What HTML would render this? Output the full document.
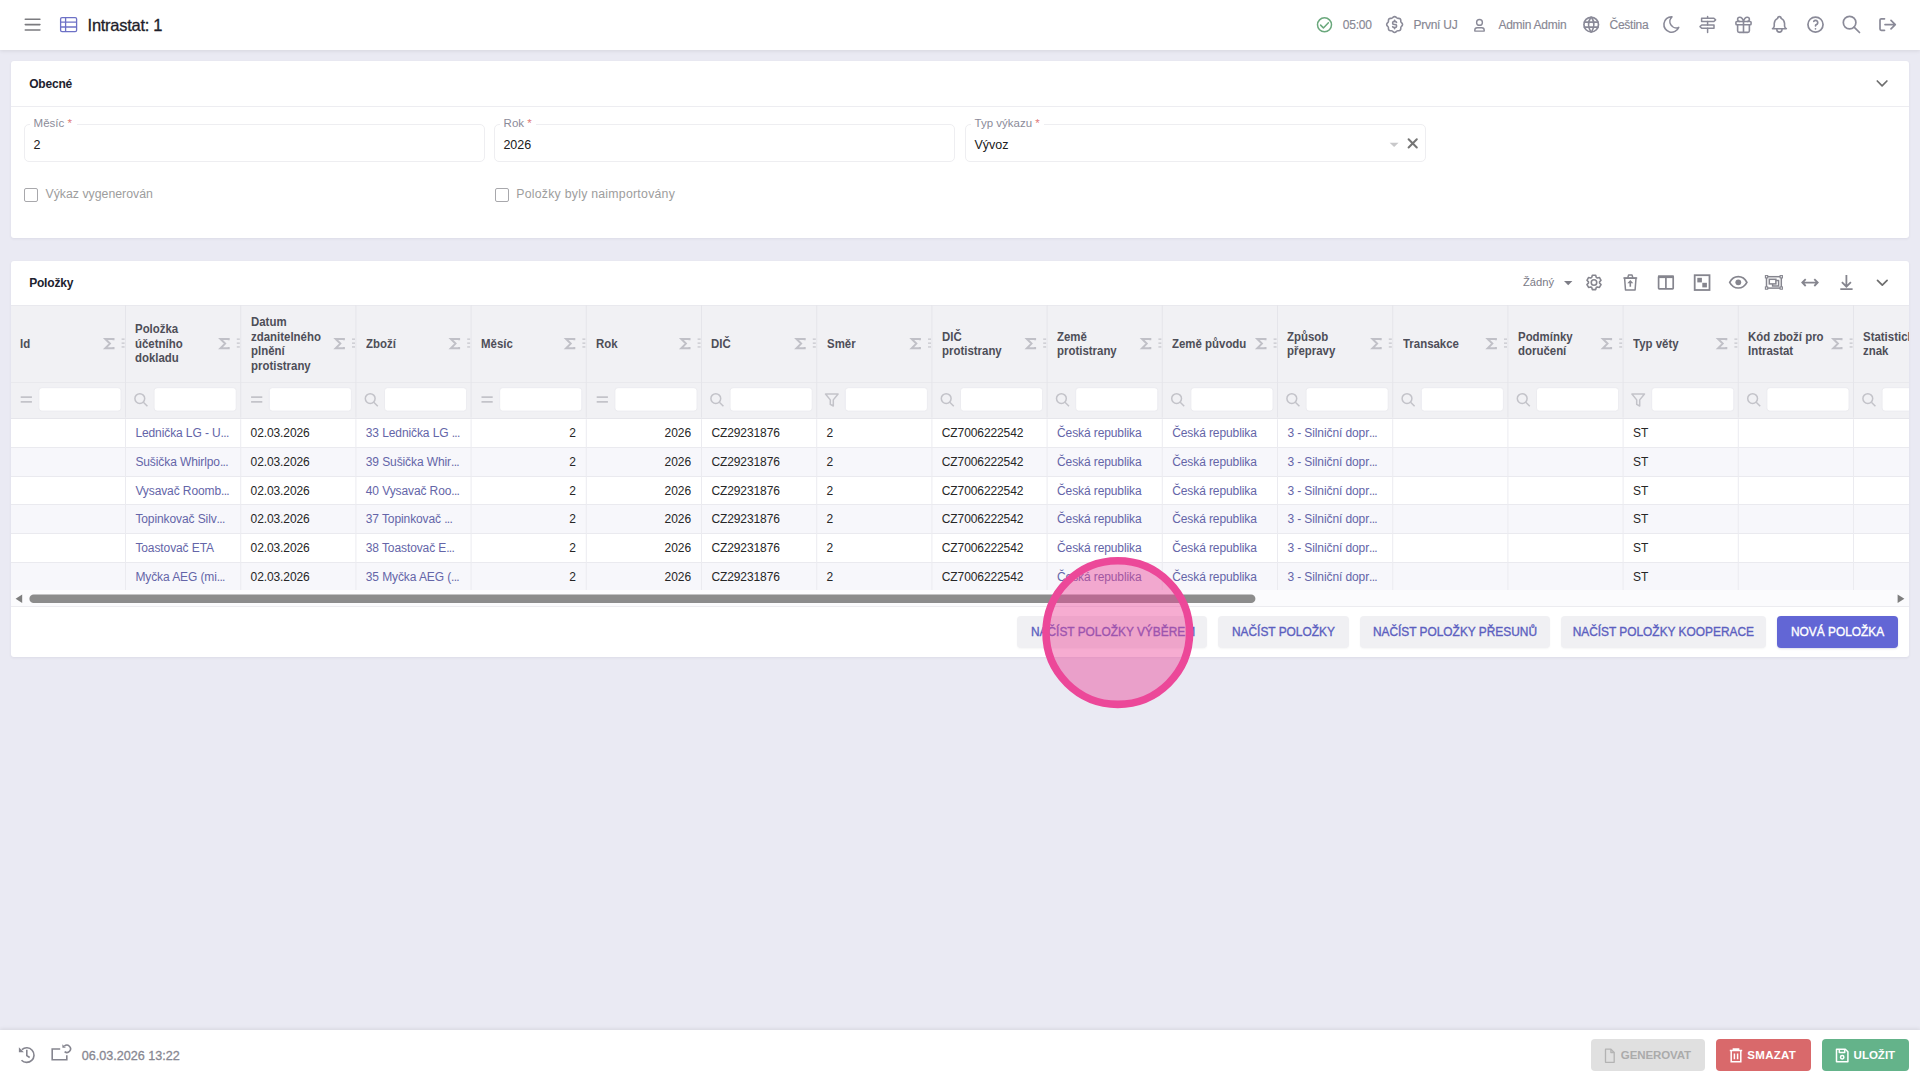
<!DOCTYPE html><html><head><meta charset="utf-8"><title>Intrastat: 1</title><style>
*{box-sizing:border-box}
html,body{margin:0;padding:0}
body{width:1920px;height:1080px;background:#eaeaf3;position:relative;overflow:hidden;font-family:"Liberation Sans",sans-serif;color:#222}
.a{position:absolute;white-space:nowrap}
.ov{position:absolute;left:0;top:0;overflow:visible}
.card{position:absolute;left:11px;width:1898px;background:#fff;border-radius:3px;box-shadow:0 1px 3px rgba(40,40,80,.07)}
.fld{position:absolute;top:124px;height:38px;border:1px solid #eeeef1;border-radius:5px;background:#fff}
.btn{position:absolute;top:616px;height:32px;border-radius:4px;background:#f0f0f3;color:#5c5fc0;font-size:11.9px;-webkit-text-stroke:0.35px currentColor;line-height:32px;text-align:center;white-space:nowrap;box-shadow:0 1px 2px rgba(0,0,0,.04)}
.fbtn{position:absolute;top:1039px;height:32px;border-radius:4px;white-space:nowrap;color:#fff}
</style></head><body>
<div class="a" style="left:0;top:0;width:1920px;height:50px;background:#fff;box-shadow:0 1px 4px rgba(0,0,0,.09)"></div>
<svg class="ov" width="1920" height="50" viewBox="0 0 1920 50"><g stroke="#7b7b7f" stroke-width="1.6" stroke-linecap="round"><path d="M25.3 19.2h14.6M25.3 24.6h14.6M25.3 30h14.6"/></g><g fill="none" stroke="#6d71c6" stroke-width="1.3"><rect x="60.6" y="17.6" width="16" height="14" rx="1.4"/><path d="M60.6 22.2h16M60.6 27h16M65.6 17.6v14"/></g><g fill="none" stroke="#6aa87c" stroke-width="1.5" stroke-linecap="round" stroke-linejoin="round"><circle cx="1324.5" cy="24.8" r="7"/><path d="M1320.6 25.1l2.8 2.8l5 -5.2"/></g><g transform="translate(1384.040,13.940) scale(0.88)" fill="none" stroke="#8a8a98" stroke-width="1.818" stroke-linecap="round" stroke-linejoin="round"><path d="M5 7.2a2.2 2.2 0 0 1 2.2 -2.2h1a2.2 2.2 0 0 0 1.55 -.64l.7 -.7a2.2 2.2 0 0 1 3.12 0l.7 .7c.412 .41 .97 .64 1.55 .64h1a2.2 2.2 0 0 1 2.2 2.2v1c0 .58 .23 1.138 .64 1.55l.7 .7a2.2 2.2 0 0 1 0 3.12l-.7 .7a2.2 2.2 0 0 0 -.64 1.55v1a2.2 2.2 0 0 1 -2.2 2.2h-1a2.2 2.2 0 0 0 -1.55 .64l-.7 .7a2.2 2.2 0 0 1 -3.12 0l-.7 -.7a2.2 2.2 0 0 0 -1.55 -.64h-1a2.2 2.2 0 0 1 -2.2 -2.2v-1a2.2 2.2 0 0 0 -.64 -1.55l-.7 -.7a2.2 2.2 0 0 1 0 -3.12l.7 -.7a2.2 2.2 0 0 0 .64 -1.55v-1"/><path d="M14.2 9.6a1.7 1.7 0 0 0 -1.6 -1h-1.2a1.7 1.7 0 0 0 0 3.4h1.2a1.7 1.7 0 0 1 0 3.4h-1.2a1.7 1.7 0 0 1 -1.6 -1"/><path d="M12 7.3v1.3"/><path d="M12 15.4v1.3"/></g><g fill="none" stroke="#8a8a98" stroke-width="1.4"><circle cx="1479.5" cy="22.4" r="2.9"/><path d="M1474.8 31.1v-0.9a2.4 2.4 0 0 1 2.4 -2.4h4.6a2.4 2.4 0 0 1 2.4 2.4v0.9z" stroke-linejoin="round"/></g><g transform="translate(1581.480,14.880) scale(0.81)" fill="none" stroke="#8a8a98" stroke-width="2.099" stroke-linecap="round" stroke-linejoin="round"><path d="M3 12a9 9 0 1 0 18 0a9 9 0 0 0 -18 0"/><path d="M3.6 9h16.8"/><path d="M3.6 15h16.8"/><path d="M11.5 3a17 17 0 0 0 0 18"/><path d="M12.5 3a17 17 0 0 1 0 18"/></g><g transform="translate(1661.340,14.240) scale(0.855)" fill="none" stroke="#8a8a98" stroke-width="1.871" stroke-linecap="round" stroke-linejoin="round"><path d="M12 3c.132 0 .263 0 .393 0a7.5 7.5 0 0 0 7.92 12.446a9 9 0 1 1 -8.313 -12.454z"/></g><g fill="none" stroke="#8a8a98" stroke-width="1.5" stroke-linejoin="round" stroke-linecap="round"><path d="M1701.6 18.3h12.3l1.7 1.6l-1.7 1.6h-12.3z"/><path d="M1714 25h-12.3l-1.7 1.6l1.7 1.6H1714z"/><path d="M1707.6 16.6v1.7M1707.6 21.5v3.5M1707.6 28.2v4.2"/></g><g transform="translate(1733.420,14.720) scale(0.84)" fill="none" stroke="#8a8a98" stroke-width="1.905" stroke-linecap="round" stroke-linejoin="round"><path d="M3 9a1 1 0 0 1 1 -1h16a1 1 0 0 1 1 1v2a1 1 0 0 1 -1 1h-16a1 1 0 0 1 -1 -1z"/><path d="M12 8l0 13"/><path d="M19 12v7a2 2 0 0 1 -2 2h-10a2 2 0 0 1 -2 -2v-7"/><path d="M7.5 8a2.5 2.5 0 0 1 0 -5a4.8 8 0 0 1 4.5 5a4.8 8 0 0 1 4.5 -5a2.5 2.5 0 0 1 0 5"/></g><g transform="translate(1769.080,14.080) scale(0.86)" fill="none" stroke="#8a8a98" stroke-width="1.860" stroke-linecap="round" stroke-linejoin="round"><path d="M10 5a2 2 0 1 1 4 0a7 7 0 0 1 4 6v3a4 4 0 0 0 2 3h-16a4 4 0 0 0 2 -3v-3a7 7 0 0 1 4 -6"/><path d="M9 17v1a3 3 0 0 0 6 0v-1"/></g><g transform="translate(1805.420,14.520) scale(0.84)" fill="none" stroke="#8a8a98" stroke-width="2.024" stroke-linecap="round" stroke-linejoin="round"><path d="M12 12m-9 0a9 9 0 1 0 18 0a9 9 0 1 0 -18 0"/><path d="M12 17l0 .01"/><path d="M12 13.5a1.5 1.5 0 0 1 1 -1.5a2.6 2.6 0 1 0 -3 -4"/></g><g transform="translate(1840.600,13.600) scale(0.9)" fill="none" stroke="#8a8a98" stroke-width="1.889" stroke-linecap="round" stroke-linejoin="round"><path d="M10 10m-7 0a7 7 0 1 0 14 0a7 7 0 1 0 -14 0"/><path d="M21 21l-6 -6"/></g><g fill="none" stroke="#8a8a98" stroke-width="1.7" stroke-linecap="round" stroke-linejoin="round"><path d="M1884.5 18.8h-3.2a1.3 1.3 0 0 0 -1.3 1.3v8.9a1.3 1.3 0 0 0 1.3 1.3h3.2"/><path d="M1885 24.6h10.3M1891 20.3l4.3 4.3l-4.3 4.3"/></g></svg>
<div class="a" style="left:87.60px;top:14.58px;font-size:16.5px;line-height:21px;color:#1e1e2a;letter-spacing:-0.28px;-webkit-text-stroke:0.3px #1e1e2a">Intrastat: 1</div>
<div class="a" style="left:1342.80px;top:16.74px;font-size:12px;line-height:16px;color:#878793;letter-spacing:-0.25px;-webkit-text-stroke:0.15px #878793">05:00</div>
<div class="a" style="left:1413.40px;top:16.74px;font-size:12px;line-height:16px;color:#878793;letter-spacing:-0.25px;-webkit-text-stroke:0.15px #878793">První UJ</div>
<div class="a" style="left:1498.40px;top:16.74px;font-size:12px;line-height:16px;color:#878793;letter-spacing:-0.25px;-webkit-text-stroke:0.15px #878793">Admin Admin</div>
<div class="a" style="left:1609.50px;top:16.74px;font-size:12px;line-height:16px;color:#878793;letter-spacing:-0.25px;-webkit-text-stroke:0.15px #878793">Čeština</div>
<div class="card" style="top:61px;height:177px"><div class="a" style="left:0;top:45px;width:1898px;height:1px;background:#ededf1"></div></div>
<div class="a" style="left:29.20px;top:75.84px;font-size:12px;line-height:16px;font-weight:bold;color:#20222e;letter-spacing:-0.2px">Obecné</div>
<div class="fld" style="left:24px;width:461px"></div>
<div class="a" style="left:30px;top:120px;width:47.1px;height:8px;background:#fff"></div>
<div class="a" style="left:33.60px;top:116.22px;font-size:11.5px;line-height:15px;color:#8b8b99">Měsíc <span style="color:#e07b7b">*</span></div>
<div class="a" style="left:33.40px;top:137.17px;font-size:12.5px;line-height:16px;color:#202020">2</div>
<div class="fld" style="left:494px;width:461px"></div>
<div class="a" style="left:500px;top:120px;width:36.0px;height:8px;background:#fff"></div>
<div class="a" style="left:503.60px;top:116.22px;font-size:11.5px;line-height:15px;color:#8b8b99">Rok <span style="color:#e07b7b">*</span></div>
<div class="a" style="left:503.40px;top:137.17px;font-size:12.5px;line-height:16px;color:#202020">2026</div>
<div class="fld" style="left:965px;width:461px"></div>
<div class="a" style="left:971px;top:120px;width:73.0px;height:8px;background:#fff"></div>
<div class="a" style="left:974.60px;top:116.22px;font-size:11.5px;line-height:15px;color:#8b8b99">Typ výkazu <span style="color:#e07b7b">*</span></div>
<div class="a" style="left:974.40px;top:137.17px;font-size:12.5px;line-height:16px;color:#202020">Vývoz</div>
<svg class="ov" width="1920" height="200" viewBox="0 0 1920 200"><path d="M1389.6 142.7h9l-4.5 4.4z" fill="#c8c8ca"/><path d="M1408.6 139.3l8.2 8.2M1416.8 139.3l-8.2 8.2" stroke="#757575" stroke-width="2" stroke-linecap="round"/><path d="M1877.3 81l4.8 4.8l4.8 -4.8" fill="none" stroke="#6e6e6e" stroke-width="1.7" stroke-linecap="round" stroke-linejoin="round"/></svg>
<div class="a" style="left:24px;top:188px;width:14px;height:14px;border:1.5px solid #a8a8ac;border-radius:2px"></div>
<div class="a" style="left:45.50px;top:186.44px;font-size:12.3px;line-height:16px;color:#9d9d9d">Výkaz vygenerován</div>
<div class="a" style="left:494.5px;top:188px;width:14px;height:14px;border:1.5px solid #a8a8ac;border-radius:2px"></div>
<div class="a" style="left:516.20px;top:186.44px;font-size:12.3px;line-height:16px;color:#9d9d9d;letter-spacing:0.25px">Položky byly naimportovány</div>
<div class="card" style="top:261px;height:396px"></div>
<div class="a" style="left:29.20px;top:274.54px;font-size:12px;line-height:16px;font-weight:bold;color:#20222e;letter-spacing:-0.2px">Položky</div>
<div class="a" style="left:1523.00px;top:274.92px;font-size:11.2px;line-height:15px;color:#7a7a86">Žádný</div>
<svg class="ov" width="1920" height="300" viewBox="0 0 1920 300"><path d="M1564 281h8.4l-4.2 4.2z" fill="#7d7d86"/><path d="M1591.74 277.38L1592.35 275.29L1595.65 275.29L1596.26 277.38L1597.26 277.96L1599.38 277.44L1601.03 280.30L1599.52 281.87L1599.52 283.03L1601.03 284.60L1599.38 287.46L1597.26 286.94L1596.26 287.52L1595.65 289.61L1592.35 289.61L1591.74 287.52L1590.74 286.94L1588.62 287.46L1586.97 284.60L1588.48 283.03L1588.48 281.87L1586.97 280.30L1588.62 277.44L1590.74 277.96z" fill="none" stroke="#85858e" stroke-width="1.6" stroke-linejoin="round"/><circle cx="1594" cy="282.45" r="2.75" fill="none" stroke="#85858e" stroke-width="1.6"/><g fill="none" stroke="#85858e" stroke-width="1.5" stroke-linejoin="round"><path d="M1624.6 278.2h11.4l-0.9 11.8h-9.6z"/><path d="M1623.4 278h13.8M1627.8 277.6l0.8 -2.7h3.4l0.8 2.7"/></g><path fill="#85858e" d="M1630.3 280l3 3.3h-2.2v3.4h-1.6v-3.4h-2.2z"/><g fill="none" stroke="#85858e" stroke-width="1.7"><rect x="1658.6" y="276.3" width="14.6" height="12.6" rx="0.6"/><path d="M1665.9 277v11.9"/></g><rect x="1658" y="275.5" width="15.8" height="2.6" fill="#85858e"/><rect x="1694.7" y="275.2" width="14.8" height="14.8" fill="none" stroke="#85858e" stroke-width="1.8"/><rect x="1697.3" y="277.8" width="4.6" height="4.6" fill="#85858e"/><rect x="1702.3" y="282.8" width="4.6" height="4.6" fill="#85858e"/><path fill="none" stroke="#85858e" stroke-width="1.7" d="M1729.7 282.3c2-3.9 5-5.7 8.6-5.7s6.6 1.8 8.6 5.7c-2 3.9-5 5.7-8.6 5.7s-6.6-1.8-8.6-5.7z"/><circle cx="1738.3" cy="282.3" r="2.9" fill="#85858e"/><g fill="none" stroke="#85858e" stroke-width="1.5"><rect x="1766.5" y="276.7" width="14.8" height="11.4"/><rect x="1769.3" y="279.3" width="6.6" height="4.6"/><path d="M1772.6 283.9v2.1h6v-5.4h-2.7"/></g><g fill="#fff" stroke="#85858e" stroke-width="1.1"><rect x="1765.4" y="275.6" width="2.3" height="2.3"/><rect x="1780.1" y="275.6" width="2.3" height="2.3"/><rect x="1765.4" y="286.9" width="2.3" height="2.3"/><rect x="1780.1" y="286.9" width="2.3" height="2.3"/></g><path fill="none" stroke="#85858e" stroke-width="1.8" stroke-linejoin="miter" d="M1802.5 282.6h15M1805.7 279.2l-3.4 3.4l3.4 3.4M1814.3 279.2l3.4 3.4l-3.4 3.4"/><path fill="none" stroke="#85858e" stroke-width="1.8" d="M1846.4 275v11.6M1841.9 282.2l4.5 4.5l4.5 -4.5M1840.3 289.1h12.3"/><path d="M1877.5 280.4l4.8 4.8l4.8 -4.8" fill="none" stroke="#6e6e6e" stroke-width="1.7" stroke-linecap="round" stroke-linejoin="round"/></svg>
<div class="a" style="left:0;top:0;width:1920px;height:1080px;overflow:hidden;clip-path:inset(0 11px 0 11px)">
<div class="a" style="left:11px;top:305px;width:1898px;height:113.6px;background:#f1f1f4;border-top:1px solid #e9e9ee"></div>
<div class="a" style="left:11px;top:381.5px;width:1898px;height:1px;background:#e9e9ed"></div>
<div class="a" style="left:11px;top:418.2px;width:1898px;height:1px;background:#e6e6eb"></div>
<div class="a" style="left:20.10px;top:336.75px;font-size:12.3px;line-height:14.5px;font-weight:bold;color:#4e4e58;transform:scaleX(0.93);transform-origin:0 0">Id</div>
<div class="a" style="left:135.30px;top:322.25px;font-size:12.3px;line-height:14.5px;font-weight:bold;color:#4e4e58;transform:scaleX(0.93);transform-origin:0 0">Položka<br>účetního<br>dokladu</div>
<div class="a" style="left:250.50px;top:315.00px;font-size:12.3px;line-height:14.5px;font-weight:bold;color:#4e4e58;transform:scaleX(0.93);transform-origin:0 0">Datum<br>zdanitelného<br>plnění<br>protistrany</div>
<div class="a" style="left:365.70px;top:336.75px;font-size:12.3px;line-height:14.5px;font-weight:bold;color:#4e4e58;transform:scaleX(0.93);transform-origin:0 0">Zboží</div>
<div class="a" style="left:480.90px;top:336.75px;font-size:12.3px;line-height:14.5px;font-weight:bold;color:#4e4e58;transform:scaleX(0.93);transform-origin:0 0">Měsíc</div>
<div class="a" style="left:596.10px;top:336.75px;font-size:12.3px;line-height:14.5px;font-weight:bold;color:#4e4e58;transform:scaleX(0.93);transform-origin:0 0">Rok</div>
<div class="a" style="left:711.30px;top:336.75px;font-size:12.3px;line-height:14.5px;font-weight:bold;color:#4e4e58;transform:scaleX(0.93);transform-origin:0 0">DIČ</div>
<div class="a" style="left:826.50px;top:336.75px;font-size:12.3px;line-height:14.5px;font-weight:bold;color:#4e4e58;transform:scaleX(0.93);transform-origin:0 0">Směr</div>
<div class="a" style="left:941.70px;top:329.50px;font-size:12.3px;line-height:14.5px;font-weight:bold;color:#4e4e58;transform:scaleX(0.93);transform-origin:0 0">DIČ<br>protistrany</div>
<div class="a" style="left:1056.90px;top:329.50px;font-size:12.3px;line-height:14.5px;font-weight:bold;color:#4e4e58;transform:scaleX(0.93);transform-origin:0 0">Země<br>protistrany</div>
<div class="a" style="left:1172.10px;top:336.75px;font-size:12.3px;line-height:14.5px;font-weight:bold;color:#4e4e58;transform:scaleX(0.93);transform-origin:0 0">Země původu</div>
<div class="a" style="left:1287.30px;top:329.50px;font-size:12.3px;line-height:14.5px;font-weight:bold;color:#4e4e58;transform:scaleX(0.93);transform-origin:0 0">Způsob<br>přepravy</div>
<div class="a" style="left:1402.50px;top:336.75px;font-size:12.3px;line-height:14.5px;font-weight:bold;color:#4e4e58;transform:scaleX(0.93);transform-origin:0 0">Transakce</div>
<div class="a" style="left:1517.70px;top:329.50px;font-size:12.3px;line-height:14.5px;font-weight:bold;color:#4e4e58;transform:scaleX(0.93);transform-origin:0 0">Podmínky<br>doručení</div>
<div class="a" style="left:1632.90px;top:336.75px;font-size:12.3px;line-height:14.5px;font-weight:bold;color:#4e4e58;transform:scaleX(0.93);transform-origin:0 0">Typ věty</div>
<div class="a" style="left:1748.10px;top:329.50px;font-size:12.3px;line-height:14.5px;font-weight:bold;color:#4e4e58;transform:scaleX(0.93);transform-origin:0 0">Kód zboží pro<br>Intrastat</div>
<div class="a" style="left:1863.30px;top:329.50px;font-size:12.3px;line-height:14.5px;font-weight:bold;color:#4e4e58;transform:scaleX(0.93);transform-origin:0 0">Statistický<br>znak</div>
</div>
<svg class="ov" width="1909" height="1080" viewBox="0 0 1909 1080" style="clip-path:inset(0 0 0 11px)"><path d="M113.50 340.2V339H105.30L109.90 343.6L105.30 348.2H113.50V347" fill="none" stroke="#c0c0c7" stroke-width="2" stroke-linejoin="miter"/><g fill="#cdcdd3"><rect x="121.60" y="338.4" width="3" height="1.5"/><rect x="121.60" y="342.4" width="3" height="1.5"/><rect x="121.60" y="346.2" width="3" height="1.5"/></g><rect x="125.00" y="305" width="1" height="112.6" fill="#e5e5ea"/><path d="M20.70 397.2h11.2M20.70 401.8h11.2" stroke="#c3c3c9" stroke-width="1.8"/><rect x="38.90" y="387.7" width="82.10" height="23.4" rx="3" fill="#fff" stroke="#ececf0" stroke-width="1"/><path d="M228.70 340.2V339H220.50L225.10 343.6L220.50 348.2H228.70V347" fill="none" stroke="#c0c0c7" stroke-width="2" stroke-linejoin="miter"/><g fill="#cdcdd3"><rect x="236.80" y="338.4" width="3" height="1.5"/><rect x="236.80" y="342.4" width="3" height="1.5"/><rect x="236.80" y="346.2" width="3" height="1.5"/></g><rect x="240.20" y="305" width="1" height="112.6" fill="#e5e5ea"/><g fill="none" stroke="#c3c3c9" stroke-width="1.5"><circle cx="139.80" cy="398.6" r="4.9"/><path d="M143.40 402.2l4 4"/></g><rect x="154.10" y="387.7" width="82.10" height="23.4" rx="3" fill="#fff" stroke="#ececf0" stroke-width="1"/><path d="M343.90 340.2V339H335.70L340.30 343.6L335.70 348.2H343.90V347" fill="none" stroke="#c0c0c7" stroke-width="2" stroke-linejoin="miter"/><g fill="#cdcdd3"><rect x="352.00" y="338.4" width="3" height="1.5"/><rect x="352.00" y="342.4" width="3" height="1.5"/><rect x="352.00" y="346.2" width="3" height="1.5"/></g><rect x="355.40" y="305" width="1" height="112.6" fill="#e5e5ea"/><path d="M251.10 397.2h11.2M251.10 401.8h11.2" stroke="#c3c3c9" stroke-width="1.8"/><rect x="269.30" y="387.7" width="82.10" height="23.4" rx="3" fill="#fff" stroke="#ececf0" stroke-width="1"/><path d="M459.10 340.2V339H450.90L455.50 343.6L450.90 348.2H459.10V347" fill="none" stroke="#c0c0c7" stroke-width="2" stroke-linejoin="miter"/><g fill="#cdcdd3"><rect x="467.20" y="338.4" width="3" height="1.5"/><rect x="467.20" y="342.4" width="3" height="1.5"/><rect x="467.20" y="346.2" width="3" height="1.5"/></g><rect x="470.60" y="305" width="1" height="112.6" fill="#e5e5ea"/><g fill="none" stroke="#c3c3c9" stroke-width="1.5"><circle cx="370.20" cy="398.6" r="4.9"/><path d="M373.80 402.2l4 4"/></g><rect x="384.50" y="387.7" width="82.10" height="23.4" rx="3" fill="#fff" stroke="#ececf0" stroke-width="1"/><path d="M574.30 340.2V339H566.10L570.70 343.6L566.10 348.2H574.30V347" fill="none" stroke="#c0c0c7" stroke-width="2" stroke-linejoin="miter"/><g fill="#cdcdd3"><rect x="582.40" y="338.4" width="3" height="1.5"/><rect x="582.40" y="342.4" width="3" height="1.5"/><rect x="582.40" y="346.2" width="3" height="1.5"/></g><rect x="585.80" y="305" width="1" height="112.6" fill="#e5e5ea"/><path d="M481.50 397.2h11.2M481.50 401.8h11.2" stroke="#c3c3c9" stroke-width="1.8"/><rect x="499.70" y="387.7" width="82.10" height="23.4" rx="3" fill="#fff" stroke="#ececf0" stroke-width="1"/><path d="M689.50 340.2V339H681.30L685.90 343.6L681.30 348.2H689.50V347" fill="none" stroke="#c0c0c7" stroke-width="2" stroke-linejoin="miter"/><g fill="#cdcdd3"><rect x="697.60" y="338.4" width="3" height="1.5"/><rect x="697.60" y="342.4" width="3" height="1.5"/><rect x="697.60" y="346.2" width="3" height="1.5"/></g><rect x="701.00" y="305" width="1" height="112.6" fill="#e5e5ea"/><path d="M596.70 397.2h11.2M596.70 401.8h11.2" stroke="#c3c3c9" stroke-width="1.8"/><rect x="614.90" y="387.7" width="82.10" height="23.4" rx="3" fill="#fff" stroke="#ececf0" stroke-width="1"/><path d="M804.70 340.2V339H796.50L801.10 343.6L796.50 348.2H804.70V347" fill="none" stroke="#c0c0c7" stroke-width="2" stroke-linejoin="miter"/><g fill="#cdcdd3"><rect x="812.80" y="338.4" width="3" height="1.5"/><rect x="812.80" y="342.4" width="3" height="1.5"/><rect x="812.80" y="346.2" width="3" height="1.5"/></g><rect x="816.20" y="305" width="1" height="112.6" fill="#e5e5ea"/><g fill="none" stroke="#c3c3c9" stroke-width="1.5"><circle cx="715.80" cy="398.6" r="4.9"/><path d="M719.40 402.2l4 4"/></g><rect x="730.10" y="387.7" width="82.10" height="23.4" rx="3" fill="#fff" stroke="#ececf0" stroke-width="1"/><path d="M919.90 340.2V339H911.70L916.30 343.6L911.70 348.2H919.90V347" fill="none" stroke="#c0c0c7" stroke-width="2" stroke-linejoin="miter"/><g fill="#cdcdd3"><rect x="928.00" y="338.4" width="3" height="1.5"/><rect x="928.00" y="342.4" width="3" height="1.5"/><rect x="928.00" y="346.2" width="3" height="1.5"/></g><rect x="931.40" y="305" width="1" height="112.6" fill="#e5e5ea"/><path d="M825.50 394h12.6l-4.8 5.9v6.1l-3 -1.6v-4.5z" fill="none" stroke="#c3c3c9" stroke-width="1.5" stroke-linejoin="round"/><rect x="845.30" y="387.7" width="82.10" height="23.4" rx="3" fill="#fff" stroke="#ececf0" stroke-width="1"/><path d="M1035.10 340.2V339H1026.90L1031.50 343.6L1026.90 348.2H1035.10V347" fill="none" stroke="#c0c0c7" stroke-width="2" stroke-linejoin="miter"/><g fill="#cdcdd3"><rect x="1043.20" y="338.4" width="3" height="1.5"/><rect x="1043.20" y="342.4" width="3" height="1.5"/><rect x="1043.20" y="346.2" width="3" height="1.5"/></g><rect x="1046.60" y="305" width="1" height="112.6" fill="#e5e5ea"/><g fill="none" stroke="#c3c3c9" stroke-width="1.5"><circle cx="946.20" cy="398.6" r="4.9"/><path d="M949.80 402.2l4 4"/></g><rect x="960.50" y="387.7" width="82.10" height="23.4" rx="3" fill="#fff" stroke="#ececf0" stroke-width="1"/><path d="M1150.30 340.2V339H1142.10L1146.70 343.6L1142.10 348.2H1150.30V347" fill="none" stroke="#c0c0c7" stroke-width="2" stroke-linejoin="miter"/><g fill="#cdcdd3"><rect x="1158.40" y="338.4" width="3" height="1.5"/><rect x="1158.40" y="342.4" width="3" height="1.5"/><rect x="1158.40" y="346.2" width="3" height="1.5"/></g><rect x="1161.80" y="305" width="1" height="112.6" fill="#e5e5ea"/><g fill="none" stroke="#c3c3c9" stroke-width="1.5"><circle cx="1061.40" cy="398.6" r="4.9"/><path d="M1065.00 402.2l4 4"/></g><rect x="1075.70" y="387.7" width="82.10" height="23.4" rx="3" fill="#fff" stroke="#ececf0" stroke-width="1"/><path d="M1265.50 340.2V339H1257.30L1261.90 343.6L1257.30 348.2H1265.50V347" fill="none" stroke="#c0c0c7" stroke-width="2" stroke-linejoin="miter"/><g fill="#cdcdd3"><rect x="1273.60" y="338.4" width="3" height="1.5"/><rect x="1273.60" y="342.4" width="3" height="1.5"/><rect x="1273.60" y="346.2" width="3" height="1.5"/></g><rect x="1277.00" y="305" width="1" height="112.6" fill="#e5e5ea"/><g fill="none" stroke="#c3c3c9" stroke-width="1.5"><circle cx="1176.60" cy="398.6" r="4.9"/><path d="M1180.20 402.2l4 4"/></g><rect x="1190.90" y="387.7" width="82.10" height="23.4" rx="3" fill="#fff" stroke="#ececf0" stroke-width="1"/><path d="M1380.70 340.2V339H1372.50L1377.10 343.6L1372.50 348.2H1380.70V347" fill="none" stroke="#c0c0c7" stroke-width="2" stroke-linejoin="miter"/><g fill="#cdcdd3"><rect x="1388.80" y="338.4" width="3" height="1.5"/><rect x="1388.80" y="342.4" width="3" height="1.5"/><rect x="1388.80" y="346.2" width="3" height="1.5"/></g><rect x="1392.20" y="305" width="1" height="112.6" fill="#e5e5ea"/><g fill="none" stroke="#c3c3c9" stroke-width="1.5"><circle cx="1291.80" cy="398.6" r="4.9"/><path d="M1295.40 402.2l4 4"/></g><rect x="1306.10" y="387.7" width="82.10" height="23.4" rx="3" fill="#fff" stroke="#ececf0" stroke-width="1"/><path d="M1495.90 340.2V339H1487.70L1492.30 343.6L1487.70 348.2H1495.90V347" fill="none" stroke="#c0c0c7" stroke-width="2" stroke-linejoin="miter"/><g fill="#cdcdd3"><rect x="1504.00" y="338.4" width="3" height="1.5"/><rect x="1504.00" y="342.4" width="3" height="1.5"/><rect x="1504.00" y="346.2" width="3" height="1.5"/></g><rect x="1507.40" y="305" width="1" height="112.6" fill="#e5e5ea"/><g fill="none" stroke="#c3c3c9" stroke-width="1.5"><circle cx="1407.00" cy="398.6" r="4.9"/><path d="M1410.60 402.2l4 4"/></g><rect x="1421.30" y="387.7" width="82.10" height="23.4" rx="3" fill="#fff" stroke="#ececf0" stroke-width="1"/><path d="M1611.10 340.2V339H1602.90L1607.50 343.6L1602.90 348.2H1611.10V347" fill="none" stroke="#c0c0c7" stroke-width="2" stroke-linejoin="miter"/><g fill="#cdcdd3"><rect x="1619.20" y="338.4" width="3" height="1.5"/><rect x="1619.20" y="342.4" width="3" height="1.5"/><rect x="1619.20" y="346.2" width="3" height="1.5"/></g><rect x="1622.60" y="305" width="1" height="112.6" fill="#e5e5ea"/><g fill="none" stroke="#c3c3c9" stroke-width="1.5"><circle cx="1522.20" cy="398.6" r="4.9"/><path d="M1525.80 402.2l4 4"/></g><rect x="1536.50" y="387.7" width="82.10" height="23.4" rx="3" fill="#fff" stroke="#ececf0" stroke-width="1"/><path d="M1726.30 340.2V339H1718.10L1722.70 343.6L1718.10 348.2H1726.30V347" fill="none" stroke="#c0c0c7" stroke-width="2" stroke-linejoin="miter"/><g fill="#cdcdd3"><rect x="1734.40" y="338.4" width="3" height="1.5"/><rect x="1734.40" y="342.4" width="3" height="1.5"/><rect x="1734.40" y="346.2" width="3" height="1.5"/></g><rect x="1737.80" y="305" width="1" height="112.6" fill="#e5e5ea"/><path d="M1631.90 394h12.6l-4.8 5.9v6.1l-3 -1.6v-4.5z" fill="none" stroke="#c3c3c9" stroke-width="1.5" stroke-linejoin="round"/><rect x="1651.70" y="387.7" width="82.10" height="23.4" rx="3" fill="#fff" stroke="#ececf0" stroke-width="1"/><path d="M1841.50 340.2V339H1833.30L1837.90 343.6L1833.30 348.2H1841.50V347" fill="none" stroke="#c0c0c7" stroke-width="2" stroke-linejoin="miter"/><g fill="#cdcdd3"><rect x="1849.60" y="338.4" width="3" height="1.5"/><rect x="1849.60" y="342.4" width="3" height="1.5"/><rect x="1849.60" y="346.2" width="3" height="1.5"/></g><rect x="1853.00" y="305" width="1" height="112.6" fill="#e5e5ea"/><g fill="none" stroke="#c3c3c9" stroke-width="1.5"><circle cx="1752.60" cy="398.6" r="4.9"/><path d="M1756.20 402.2l4 4"/></g><rect x="1766.90" y="387.7" width="82.10" height="23.4" rx="3" fill="#fff" stroke="#ececf0" stroke-width="1"/><path d="M1956.70 340.2V339H1948.50L1953.10 343.6L1948.50 348.2H1956.70V347" fill="none" stroke="#c0c0c7" stroke-width="2" stroke-linejoin="miter"/><g fill="#cdcdd3"><rect x="1964.80" y="338.4" width="3" height="1.5"/><rect x="1964.80" y="342.4" width="3" height="1.5"/><rect x="1964.80" y="346.2" width="3" height="1.5"/></g><rect x="1968.20" y="305" width="1" height="112.6" fill="#e5e5ea"/><g fill="none" stroke="#c3c3c9" stroke-width="1.5"><circle cx="1867.80" cy="398.6" r="4.9"/><path d="M1871.40 402.2l4 4"/></g><rect x="1882.10" y="387.7" width="82.10" height="23.4" rx="3" fill="#fff" stroke="#ececf0" stroke-width="1"/></svg>
<div class="a" style="left:11px;top:419.20px;width:1898px;height:28.72px;background:#ffffff;border-bottom:1px solid #eaeaef"></div>
<div class="a" style="left:135.40px;top:425.24px;font-size:12px;line-height:16px;color:#6465a8;letter-spacing:-0.1px">Lednička LG - U<span style="letter-spacing:-0.7px">...</span></div>
<div class="a" style="left:250.60px;top:425.24px;font-size:12px;line-height:16px;color:#262626;letter-spacing:-0.1px">02.03.2026</div>
<div class="a" style="left:365.80px;top:425.24px;font-size:12px;line-height:16px;color:#6465a8;letter-spacing:-0.1px">33 Lednička LG <span style="letter-spacing:-0.7px">...</span></div>
<div class="a" style="left:471.10px;top:425.24px;width:104.90px;text-align:right;font-size:12px;line-height:16px;color:#262626">2</div>
<div class="a" style="left:586.30px;top:425.24px;width:104.90px;text-align:right;font-size:12px;line-height:16px;color:#262626">2026</div>
<div class="a" style="left:711.40px;top:425.24px;font-size:12px;line-height:16px;color:#262626;letter-spacing:-0.1px">CZ29231876</div>
<div class="a" style="left:826.60px;top:425.24px;font-size:12px;line-height:16px;color:#262626;letter-spacing:-0.1px">2</div>
<div class="a" style="left:941.80px;top:425.24px;font-size:12px;line-height:16px;color:#262626;letter-spacing:-0.1px">CZ7006222542</div>
<div class="a" style="left:1057.00px;top:425.24px;font-size:12px;line-height:16px;color:#6465a8;letter-spacing:-0.1px">Česká republika</div>
<div class="a" style="left:1172.20px;top:425.24px;font-size:12px;line-height:16px;color:#6465a8;letter-spacing:-0.1px">Česká republika</div>
<div class="a" style="left:1287.40px;top:425.24px;font-size:12px;line-height:16px;color:#6465a8;letter-spacing:-0.1px">3 - Silniční dopr<span style="letter-spacing:-0.7px">...</span></div>
<div class="a" style="left:1633.00px;top:425.24px;font-size:12px;line-height:16px;color:#262626;letter-spacing:-0.1px">ST</div>
<div class="a" style="left:11px;top:447.92px;width:1898px;height:28.72px;background:#f7f7fb;border-bottom:1px solid #eaeaef"></div>
<div class="a" style="left:135.40px;top:453.96px;font-size:12px;line-height:16px;color:#6465a8;letter-spacing:-0.1px">Sušička Whirlpo<span style="letter-spacing:-0.7px">...</span></div>
<div class="a" style="left:250.60px;top:453.96px;font-size:12px;line-height:16px;color:#262626;letter-spacing:-0.1px">02.03.2026</div>
<div class="a" style="left:365.80px;top:453.96px;font-size:12px;line-height:16px;color:#6465a8;letter-spacing:-0.1px">39 Sušička Whir<span style="letter-spacing:-0.7px">...</span></div>
<div class="a" style="left:471.10px;top:453.96px;width:104.90px;text-align:right;font-size:12px;line-height:16px;color:#262626">2</div>
<div class="a" style="left:586.30px;top:453.96px;width:104.90px;text-align:right;font-size:12px;line-height:16px;color:#262626">2026</div>
<div class="a" style="left:711.40px;top:453.96px;font-size:12px;line-height:16px;color:#262626;letter-spacing:-0.1px">CZ29231876</div>
<div class="a" style="left:826.60px;top:453.96px;font-size:12px;line-height:16px;color:#262626;letter-spacing:-0.1px">2</div>
<div class="a" style="left:941.80px;top:453.96px;font-size:12px;line-height:16px;color:#262626;letter-spacing:-0.1px">CZ7006222542</div>
<div class="a" style="left:1057.00px;top:453.96px;font-size:12px;line-height:16px;color:#6465a8;letter-spacing:-0.1px">Česká republika</div>
<div class="a" style="left:1172.20px;top:453.96px;font-size:12px;line-height:16px;color:#6465a8;letter-spacing:-0.1px">Česká republika</div>
<div class="a" style="left:1287.40px;top:453.96px;font-size:12px;line-height:16px;color:#6465a8;letter-spacing:-0.1px">3 - Silniční dopr<span style="letter-spacing:-0.7px">...</span></div>
<div class="a" style="left:1633.00px;top:453.96px;font-size:12px;line-height:16px;color:#262626;letter-spacing:-0.1px">ST</div>
<div class="a" style="left:11px;top:476.64px;width:1898px;height:28.72px;background:#ffffff;border-bottom:1px solid #eaeaef"></div>
<div class="a" style="left:135.40px;top:482.68px;font-size:12px;line-height:16px;color:#6465a8;letter-spacing:-0.1px">Vysavač Roomb<span style="letter-spacing:-0.7px">...</span></div>
<div class="a" style="left:250.60px;top:482.68px;font-size:12px;line-height:16px;color:#262626;letter-spacing:-0.1px">02.03.2026</div>
<div class="a" style="left:365.80px;top:482.68px;font-size:12px;line-height:16px;color:#6465a8;letter-spacing:-0.1px">40 Vysavač Roo<span style="letter-spacing:-0.7px">...</span></div>
<div class="a" style="left:471.10px;top:482.68px;width:104.90px;text-align:right;font-size:12px;line-height:16px;color:#262626">2</div>
<div class="a" style="left:586.30px;top:482.68px;width:104.90px;text-align:right;font-size:12px;line-height:16px;color:#262626">2026</div>
<div class="a" style="left:711.40px;top:482.68px;font-size:12px;line-height:16px;color:#262626;letter-spacing:-0.1px">CZ29231876</div>
<div class="a" style="left:826.60px;top:482.68px;font-size:12px;line-height:16px;color:#262626;letter-spacing:-0.1px">2</div>
<div class="a" style="left:941.80px;top:482.68px;font-size:12px;line-height:16px;color:#262626;letter-spacing:-0.1px">CZ7006222542</div>
<div class="a" style="left:1057.00px;top:482.68px;font-size:12px;line-height:16px;color:#6465a8;letter-spacing:-0.1px">Česká republika</div>
<div class="a" style="left:1172.20px;top:482.68px;font-size:12px;line-height:16px;color:#6465a8;letter-spacing:-0.1px">Česká republika</div>
<div class="a" style="left:1287.40px;top:482.68px;font-size:12px;line-height:16px;color:#6465a8;letter-spacing:-0.1px">3 - Silniční dopr<span style="letter-spacing:-0.7px">...</span></div>
<div class="a" style="left:1633.00px;top:482.68px;font-size:12px;line-height:16px;color:#262626;letter-spacing:-0.1px">ST</div>
<div class="a" style="left:11px;top:505.36px;width:1898px;height:28.72px;background:#f7f7fb;border-bottom:1px solid #eaeaef"></div>
<div class="a" style="left:135.40px;top:511.40px;font-size:12px;line-height:16px;color:#6465a8;letter-spacing:-0.1px">Topinkovač Silv<span style="letter-spacing:-0.7px">...</span></div>
<div class="a" style="left:250.60px;top:511.40px;font-size:12px;line-height:16px;color:#262626;letter-spacing:-0.1px">02.03.2026</div>
<div class="a" style="left:365.80px;top:511.40px;font-size:12px;line-height:16px;color:#6465a8;letter-spacing:-0.1px">37 Topinkovač <span style="letter-spacing:-0.7px">...</span></div>
<div class="a" style="left:471.10px;top:511.40px;width:104.90px;text-align:right;font-size:12px;line-height:16px;color:#262626">2</div>
<div class="a" style="left:586.30px;top:511.40px;width:104.90px;text-align:right;font-size:12px;line-height:16px;color:#262626">2026</div>
<div class="a" style="left:711.40px;top:511.40px;font-size:12px;line-height:16px;color:#262626;letter-spacing:-0.1px">CZ29231876</div>
<div class="a" style="left:826.60px;top:511.40px;font-size:12px;line-height:16px;color:#262626;letter-spacing:-0.1px">2</div>
<div class="a" style="left:941.80px;top:511.40px;font-size:12px;line-height:16px;color:#262626;letter-spacing:-0.1px">CZ7006222542</div>
<div class="a" style="left:1057.00px;top:511.40px;font-size:12px;line-height:16px;color:#6465a8;letter-spacing:-0.1px">Česká republika</div>
<div class="a" style="left:1172.20px;top:511.40px;font-size:12px;line-height:16px;color:#6465a8;letter-spacing:-0.1px">Česká republika</div>
<div class="a" style="left:1287.40px;top:511.40px;font-size:12px;line-height:16px;color:#6465a8;letter-spacing:-0.1px">3 - Silniční dopr<span style="letter-spacing:-0.7px">...</span></div>
<div class="a" style="left:1633.00px;top:511.40px;font-size:12px;line-height:16px;color:#262626;letter-spacing:-0.1px">ST</div>
<div class="a" style="left:11px;top:534.08px;width:1898px;height:28.72px;background:#ffffff;border-bottom:1px solid #eaeaef"></div>
<div class="a" style="left:135.40px;top:540.12px;font-size:12px;line-height:16px;color:#6465a8;letter-spacing:-0.1px">Toastovač ETA</div>
<div class="a" style="left:250.60px;top:540.12px;font-size:12px;line-height:16px;color:#262626;letter-spacing:-0.1px">02.03.2026</div>
<div class="a" style="left:365.80px;top:540.12px;font-size:12px;line-height:16px;color:#6465a8;letter-spacing:-0.1px">38 Toastovač E<span style="letter-spacing:-0.7px">...</span></div>
<div class="a" style="left:471.10px;top:540.12px;width:104.90px;text-align:right;font-size:12px;line-height:16px;color:#262626">2</div>
<div class="a" style="left:586.30px;top:540.12px;width:104.90px;text-align:right;font-size:12px;line-height:16px;color:#262626">2026</div>
<div class="a" style="left:711.40px;top:540.12px;font-size:12px;line-height:16px;color:#262626;letter-spacing:-0.1px">CZ29231876</div>
<div class="a" style="left:826.60px;top:540.12px;font-size:12px;line-height:16px;color:#262626;letter-spacing:-0.1px">2</div>
<div class="a" style="left:941.80px;top:540.12px;font-size:12px;line-height:16px;color:#262626;letter-spacing:-0.1px">CZ7006222542</div>
<div class="a" style="left:1057.00px;top:540.12px;font-size:12px;line-height:16px;color:#6465a8;letter-spacing:-0.1px">Česká republika</div>
<div class="a" style="left:1172.20px;top:540.12px;font-size:12px;line-height:16px;color:#6465a8;letter-spacing:-0.1px">Česká republika</div>
<div class="a" style="left:1287.40px;top:540.12px;font-size:12px;line-height:16px;color:#6465a8;letter-spacing:-0.1px">3 - Silniční dopr<span style="letter-spacing:-0.7px">...</span></div>
<div class="a" style="left:1633.00px;top:540.12px;font-size:12px;line-height:16px;color:#262626;letter-spacing:-0.1px">ST</div>
<div class="a" style="left:11px;top:562.80px;width:1898px;height:28.72px;background:#f7f7fb;border-bottom:1px solid #eaeaef"></div>
<div class="a" style="left:135.40px;top:568.84px;font-size:12px;line-height:16px;color:#6465a8;letter-spacing:-0.1px">Myčka AEG (mi<span style="letter-spacing:-0.7px">...</span></div>
<div class="a" style="left:250.60px;top:568.84px;font-size:12px;line-height:16px;color:#262626;letter-spacing:-0.1px">02.03.2026</div>
<div class="a" style="left:365.80px;top:568.84px;font-size:12px;line-height:16px;color:#6465a8;letter-spacing:-0.1px">35 Myčka AEG (<span style="letter-spacing:-0.7px">...</span></div>
<div class="a" style="left:471.10px;top:568.84px;width:104.90px;text-align:right;font-size:12px;line-height:16px;color:#262626">2</div>
<div class="a" style="left:586.30px;top:568.84px;width:104.90px;text-align:right;font-size:12px;line-height:16px;color:#262626">2026</div>
<div class="a" style="left:711.40px;top:568.84px;font-size:12px;line-height:16px;color:#262626;letter-spacing:-0.1px">CZ29231876</div>
<div class="a" style="left:826.60px;top:568.84px;font-size:12px;line-height:16px;color:#262626;letter-spacing:-0.1px">2</div>
<div class="a" style="left:941.80px;top:568.84px;font-size:12px;line-height:16px;color:#262626;letter-spacing:-0.1px">CZ7006222542</div>
<div class="a" style="left:1057.00px;top:568.84px;font-size:12px;line-height:16px;color:#6465a8;letter-spacing:-0.1px">Česká republika</div>
<div class="a" style="left:1172.20px;top:568.84px;font-size:12px;line-height:16px;color:#6465a8;letter-spacing:-0.1px">Česká republika</div>
<div class="a" style="left:1287.40px;top:568.84px;font-size:12px;line-height:16px;color:#6465a8;letter-spacing:-0.1px">3 - Silniční dopr<span style="letter-spacing:-0.7px">...</span></div>
<div class="a" style="left:1633.00px;top:568.84px;font-size:12px;line-height:16px;color:#262626;letter-spacing:-0.1px">ST</div>
<svg class="ov" width="1920" height="1080" viewBox="0 0 1920 1080"><rect x="125.00" y="419.20" width="1" height="172.32" fill="#ebebf0"/><rect x="240.20" y="419.20" width="1" height="172.32" fill="#ebebf0"/><rect x="355.40" y="419.20" width="1" height="172.32" fill="#ebebf0"/><rect x="470.60" y="419.20" width="1" height="172.32" fill="#ebebf0"/><rect x="585.80" y="419.20" width="1" height="172.32" fill="#ebebf0"/><rect x="701.00" y="419.20" width="1" height="172.32" fill="#ebebf0"/><rect x="816.20" y="419.20" width="1" height="172.32" fill="#ebebf0"/><rect x="931.40" y="419.20" width="1" height="172.32" fill="#ebebf0"/><rect x="1046.60" y="419.20" width="1" height="172.32" fill="#ebebf0"/><rect x="1161.80" y="419.20" width="1" height="172.32" fill="#ebebf0"/><rect x="1277.00" y="419.20" width="1" height="172.32" fill="#ebebf0"/><rect x="1392.20" y="419.20" width="1" height="172.32" fill="#ebebf0"/><rect x="1507.40" y="419.20" width="1" height="172.32" fill="#ebebf0"/><rect x="1622.60" y="419.20" width="1" height="172.32" fill="#ebebf0"/><rect x="1737.80" y="419.20" width="1" height="172.32" fill="#ebebf0"/><rect x="1853.00" y="419.20" width="1" height="172.32" fill="#ebebf0"/></svg>
<div class="a" style="left:11px;top:590.00px;width:1898px;height:17.00px;background:#fbfbfd;border-bottom:1px solid #ececf0"></div>
<svg class="ov" width="1920" height="1080" viewBox="0 0 1920 1080"><path d="M22.2 594.6v8.5L15.6 598.85z" fill="#7e7e7e"/><path d="M1897.6 594.6v8.5l6.8 -4.25z" fill="#7e7e7e"/><rect x="29.4" y="594.6" width="1226" height="8.5" rx="4.25" fill="#8c8c8c"/></svg>
<div class="btn" style="left:1016.8px;width:190.2px;overflow:hidden;text-align:left"><span style="position:absolute;left:14.2px;top:0">NAČÍST POLOŽKY VÝBĚREM</span></div>
<div class="btn" style="left:1218px;width:130.8px">NAČÍST POLOŽKY</div>
<div class="btn" style="left:1360.3px;width:189.3px">NAČÍST POLOŽKY PŘESUNŮ</div>
<div class="btn" style="left:1560.6px;width:205.4px">NAČÍST POLOŽKY KOOPERACE</div>
<div class="btn" style="left:1777px;width:121.2px;background:#6266d5;color:#fff;box-shadow:0 1px 2px rgba(40,40,120,.15)">NOVÁ POLOŽKA</div>
<div class="a" style="left:0;top:1030px;width:1920px;height:50px;background:#fff;box-shadow:0 -1px 4px rgba(0,0,0,.09)"></div>
<div class="a" style="left:81.80px;top:1047.53px;font-size:12.6px;line-height:16px;color:#878791;-webkit-text-stroke:0.3px #878791">06.03.2026 13:22</div>
<div class="fbtn" style="left:1591px;width:114.4px;background:#e0e0e0"></div>
<div class="a" style="left:1620.80px;top:1048.12px;font-size:11.5px;line-height:15px;font-weight:bold;color:#ababab;letter-spacing:-0.1px">GENEROVAT</div>
<div class="fbtn" style="left:1716px;width:95px;background:#d9696b"></div>
<div class="a" style="left:1747.30px;top:1048.12px;font-size:11.5px;line-height:15px;font-weight:bold;color:#fff;letter-spacing:0.3px">SMAZAT</div>
<div class="fbtn" style="left:1822.3px;width:86.5px;background:#64b38a"></div>
<div class="a" style="left:1853.60px;top:1048.12px;font-size:11.5px;line-height:15px;font-weight:bold;color:#fff">ULOŽIT</div>
<svg class="ov" width="1920" height="1080" viewBox="0 0 1920 1080"><g fill="none" stroke="#85858f" stroke-width="1.6" stroke-linecap="butt"><path d="M21.9 1049.6A7.3 7.3 0 1 1 21.5 1060.2"/><path d="M26.8 1049.8v5.8l2.9 1.9"/></g><path d="M18.9 1047.2v5h5z" fill="#85858f"/><g fill="none" stroke="#85858f" stroke-width="1.6"><path d="M60.2 1049H52.2v10.8h14.6v-4.6"/><path d="M64.4 1046.2A3.6 3.6 0 1 1 64.6 1051.6"/></g><path d="M62.4 1044.2v3.6h3.4z" fill="#85858f"/><g fill="none" stroke="#b3b3b3" stroke-width="1.3" stroke-linejoin="round"><path d="M1605.5 1049.2h5.4l3.3 3.3v9.8h-8.7z"/><path d="M1610.9 1049.2v3.3h3.3"/></g><g fill="none" stroke="#fff" stroke-width="1.5"><path d="M1729.8 1050.6h12.4M1733.4 1050.6v-1.6h5.2v1.6M1731.2 1050.6v11.2h9.6v-11.2M1734.4 1053.5v5.8M1737.6 1053.5v5.8"/></g><g fill="none" stroke="#fff" stroke-width="1.5" stroke-linejoin="round"><path d="M1836.5 1049.2h8.8l2.6 2.6v9.9h-11.4z"/><path d="M1839.3 1049.2v3.2h5.4v-3.2"/><circle cx="1842.2" cy="1057.3" r="1.7"/></g></svg>
<svg class="ov" width="1920" height="1080" viewBox="0 0 1920 1080"><circle cx="1117.8" cy="632.6" r="71.8" fill="rgba(236,72,153,0.45)" stroke="#ec4899" stroke-width="7.6"/></svg>
</body></html>
